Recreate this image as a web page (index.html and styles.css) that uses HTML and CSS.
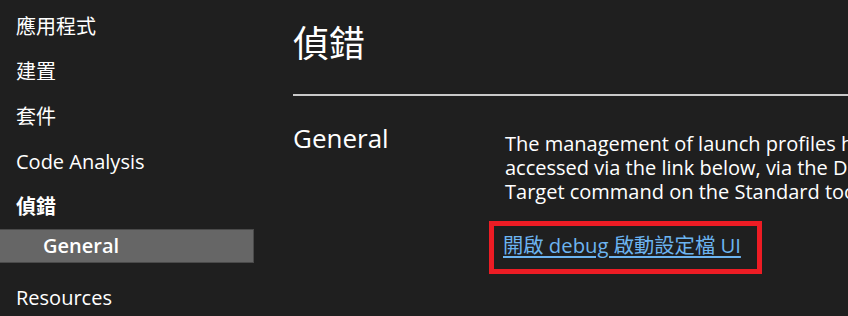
FILE: index.html
```html
<!DOCTYPE html>
<html lang="zh-Hant">
<head>
<meta charset="utf-8">
<title>偵錯</title>
<link rel="stylesheet" href="styles.css">
</head>
<body>
<div class="page">
  <nav class="sidebar">
    <div class="nav-item">應用程式</div>
    <div class="nav-item">建置</div>
    <div class="nav-item">套件</div>
    <div class="nav-item">Code Analysis</div>
    <div class="nav-item nav-item--active">偵錯</div>
    <div class="nav-sub nav-sub--selected">General</div>
    <div class="nav-item nav-item--after">Resources</div>
  </nav>
  <main class="content">
    <h1 class="title">偵錯</h1>
    <hr class="divider">
    <section class="section">
      <h2 class="section-title">General</h2>
      <div class="section-body">
        <p class="description">The management of launch profiles has moved to a dedicated dialog. It can be<br>accessed via the link below, via the Debug menu in the menu bar, or via the Debug<br>Target command on the Standard toolbar.</p>
        <div class="highlight">
          <a class="link" href="#">開啟 debug 啟動設定檔 UI</a>
        </div>
      </div>
    </section>
  </main>
</div>
</body>
</html>
```

FILE: styles.css
```css
html, body {
  margin: 0;
  padding: 0;
  background: #1f1f1f;
  color: #ffffff;
  font-family: "Open Sans", "Noto Sans CJK TC", sans-serif;
  overflow: hidden;
}

.page {
  display: flex;
  width: 848px;
  height: 316px;
  overflow: hidden;
}

.sidebar {
  width: 254px;
  flex: none;
  padding-top: 10px;
  display: flex;
  flex-direction: column;
}

.nav-item {
  font-size: 20px;
  line-height: 34px;
  height: 34px;
  padding-left: 16px;
  margin-bottom: 11px;
  white-space: nowrap;
}

.nav-item--active {
  font-weight: 700;
  margin-bottom: 5px;
}

.nav-sub {
  font-size: 20px;
  font-weight: 600;
  line-height: 32px;
  height: 32px;
  padding-left: 43px;
}

.nav-sub--selected {
  background: #666666;
  border: 1px solid #4a4a4a;
  border-left: none;
}

.nav-item--after {
  margin-top: 18px;
}

.content {
  flex: 1;
  padding-left: 39px;
  min-width: 0;
  overflow: hidden;
}

.title {
  margin: 0;
  padding-top: 18px;
  font-size: 36px;
  font-weight: 400;
  line-height: 52px;
}

.divider {
  margin: 24px 0 0 0;
  border: none;
  height: 2px;
  background: #c8c8c8;
}

.section {
  display: flex;
  padding-top: 24px;
}

.section-title {
  margin: 0;
  width: 212px;
  flex: none;
  font-size: 26px;
  font-weight: 400;
  line-height: 36px;
}

.section-body {
  padding-top: 12px;
  min-width: 0;
}

.description {
  margin: 0;
  font-size: 20px;
  line-height: 24px;
  white-space: nowrap;
}

.highlight {
  display: inline-block;
  margin-top: 17px;
  margin-left: -16px;
  border: 5px solid #ed1c24;
  padding: 4px 16px 8px 9px;
}

.link {
  display: inline-block;
  color: #6cb4f0;
  font-size: 20.3px;
  line-height: 31px;
  text-decoration: underline;
  text-underline-offset: 3px;
}
```
